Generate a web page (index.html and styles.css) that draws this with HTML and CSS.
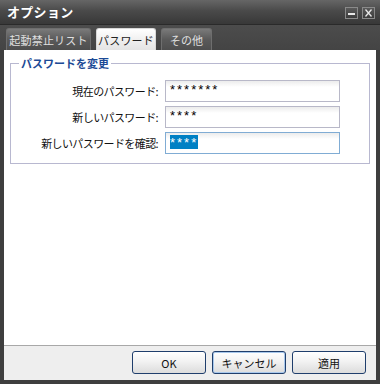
FILE: index.html
```html
<!DOCTYPE html>
<html lang="ja">
<head>
<meta charset="utf-8">
<link rel="stylesheet" href="styles.css">
</head>
<body>
<div class="window">
  <div class="titlebar">
    <span class="title">オプション</span>
    <div class="wbtns">
      <span class="wbtn"><svg width="11" height="10" viewBox="0 0 11 10"><rect x="2" y="5" width="7" height="2" fill="#e8e8e8"/></svg></span>
      <span class="wbtn"><svg width="11" height="10" viewBox="0 0 11 10"><path d="M2.5 1.5 L8.5 8.5 M8.5 1.5 L2.5 8.5" stroke="#e8e8e8" stroke-width="1.3"/></svg></span>
    </div>
  </div>
  <div class="tabs">
    <div class="tab">起動禁止リスト</div>
    <div class="tab active">パスワード</div>
    <div class="tab">その他</div>
  </div>
  <div class="panel">
    <fieldset class="group">
      <legend class="legend">パスワードを変更</legend>
      <div class="form">
        <label class="lbl">現在のパスワード:</label>
        <div class="field">*******</div>
        <label class="lbl">新しいパスワード:</label>
        <div class="field">****</div>
        <label class="lbl">新しいパスワードを確認:</label>
        <div class="field focus"><span class="sel">****</span></div>
      </div>
    </fieldset>
  </div>
  <div class="footer">
    <button class="btn">OK</button>
    <button class="btn hot">キャンセル</button>
    <button class="btn">適用</button>
  </div>
</div>
</body>
</html>
```

FILE: styles.css
```css
html, body {
  margin: 0;
  padding: 0;
  background: #3c3c3c;
}
body {
  font-family: "Noto Sans CJK JP", "Liberation Sans", sans-serif;
  font-size: 12px;
}
.window {
  width: 380px;
  height: 384px;
  display: flex;
  flex-direction: column;
  background: #3e3e3e;
  box-sizing: border-box;
}
.titlebar {
  height: 25px;
  flex: none;
  display: flex;
  align-items: center;
  justify-content: space-between;
  padding: 0 5px 0 7px;
  background: linear-gradient(#666666, #4a4a4a 45%, #383838);
  border-bottom: 1px solid #2a2a2a;
  box-sizing: border-box;
}
.title {
  color: #ffffff;
  font-weight: bold;
  font-size: 13px;
  letter-spacing: 0.3px;
  line-height: 1;
  margin-top: -1px;
}
.wbtns {
  display: flex;
  gap: 4px;
  margin-top: 1px;
}
.wbtn {
  width: 13px;
  height: 12px;
  box-sizing: border-box;
  border: 1px solid #8a8a8a;
  background: linear-gradient(#5a5a5a, #3c3c3c);
  display: flex;
  align-items: center;
  justify-content: center;
}
.tabs {
  height: 25px;
  flex: none;
  display: flex;
  align-items: flex-end;
  gap: 5px;
  padding: 0 0 0 6px;
  background: linear-gradient(#4c4c4c, #444444);
  box-sizing: border-box;
}
.tab {
  height: 22px;
  box-sizing: border-box;
  padding: 0;
  display: flex;
  align-items: center;
  justify-content: center;
  color: #e0e0e0;
  font-size: 11px;
  letter-spacing: 0.2px;
  white-space: nowrap;
  border: 1px solid #6e6e6e;
  border-bottom: none;
  border-radius: 3px 3px 0 0;
  background: linear-gradient(#7a7a7a, #5a5a5a 50%, #4e4e4e);
}
.tab:nth-child(1) { width: 85px; }
.tab:nth-child(2) { width: 60px; }
.tab:nth-child(3) { width: 51px; }
.tab.active {
  color: #222222;
  border-color: #d8d8d8;
  background: linear-gradient(#ffffff, #f0f0f0 50%, #e4e4e4);
}
.panel {
  flex: 1;
  margin: 0 4px;
  background: #ffffff;
  padding: 5px 6px 0 6px;
  border-bottom: 1px solid #a8a8a8;
}
.group {
  margin: 0;
  padding: 0 29px 9px 10px;
  border: 1px solid #b8b8d0;
  min-width: 0;
}
.legend {
  color: #1c4a96;
  font-weight: bold;
  font-size: 11px;
  line-height: 16px;
  padding: 0 2px;
  margin-left: -2px;
}
.form {
  margin-top: 9px;
  display: grid;
  grid-template-columns: 1fr 175px;
  column-gap: 7px;
  row-gap: 4px;
  align-items: center;
}
.lbl {
  text-align: right;
  color: #111111;
  font-size: 11px;
  letter-spacing: -0.6px;
  white-space: nowrap;
}
.field {
  height: 22px;
  box-sizing: border-box;
  border: 1px solid #b8b8c8;
  background: linear-gradient(#ececec, #ffffff 6px);
  font-family: "Liberation Sans", sans-serif;
  font-size: 13px;
  letter-spacing: 2px;
  line-height: 16px;
  padding: 1px 0 0 4px;
  color: #000000;
}
.field.focus {
  border-color: #80acd4;
  padding-top: 2px;
}
.sel {
  display: inline-block;
  background: #0080c4;
  color: #ffffff;
  height: 14px;
  line-height: 16px;
  margin-right: -2px;
}
.footer {
  height: 34px;
  flex: none;
  margin: 0 4px 4px 4px;
  background: #eeeeee;
  display: flex;
  justify-content: flex-end;
  align-items: flex-start;
  gap: 6px;
  padding: 5px 10px 0 0;
  box-sizing: border-box;
}
.btn {
  width: 74px;
  height: 23px;
  box-sizing: border-box;
  border: 1px solid #1f3e6c;
  border-radius: 3px;
  background: linear-gradient(#ffffff, #f2f2f2 45%, #dcdcdc);
  font-family: "Noto Sans CJK JP", "Liberation Sans", sans-serif;
  font-size: 11px;
  color: #111111;
  padding: 0;
}
.btn.hot {
  box-shadow: inset 0 0 0 1px #a8c8ec;
}
```
